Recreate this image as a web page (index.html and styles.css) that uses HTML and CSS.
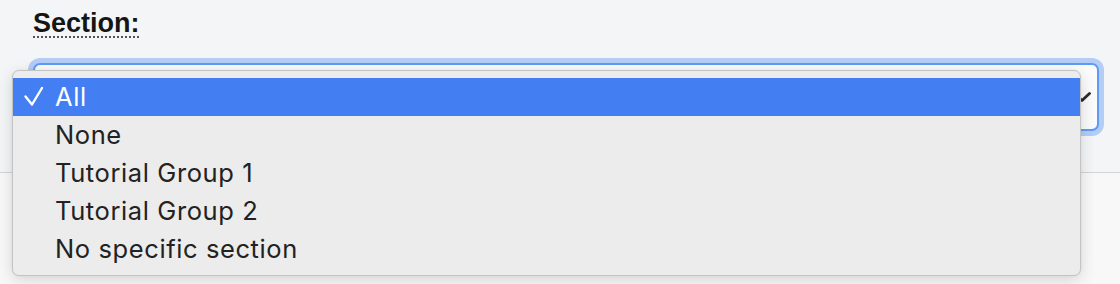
FILE: index.html
```html
<!DOCTYPE html>
<html lang="en">
<head>
<meta charset="utf-8">
<title>Section</title>
<link rel="stylesheet" href="styles.css">
</head>
<body>
<div class="panel">
  <label class="label"><abbr class="abbr" title="Section">Section:</abbr></label>
  <div class="select">
    <svg class="chevron" width="18" height="10" viewBox="0 0 18 10"><polyline points="1.5,1.5 9,8.5 16.5,1.5" fill="none" stroke="#2b2b2b" stroke-width="2.8" stroke-linecap="round" stroke-linejoin="round"/></svg>
  </div>
</div>
<div class="below"></div>
<ul class="menu">
  <li class="item selected"><svg class="check" width="40" height="38" viewBox="0 0 40 38"><polyline points="12.5,18.5 19,26.5 29,10" fill="none" stroke="#fff" stroke-width="2.4" stroke-linecap="round" stroke-linejoin="round"/></svg><span>All</span></li>
  <li class="item"><span>None</span></li>
  <li class="item"><span>Tutorial Group 1</span></li>
  <li class="item"><span>Tutorial Group 2</span></li>
  <li class="item"><span>No specific section</span></li>
</ul>
</body>
</html>
```
FILE: styles.css
```css
html, body {
  margin: 0;
  padding: 0;
}
body {
  width: 1120px;
  height: 284px;
  overflow: hidden;
  background: #f8f8f8;
  position: relative;
  font-family: "Liberation Sans", Arial, sans-serif;
}
.panel {
  box-sizing: border-box;
  height: 173px;
  padding: 8px 21px 0 33px;
  background: #f4f5f7;
  border-bottom: 1px solid #d4d4d6;
}
.label {
  display: block;
  font-weight: bold;
  font-size: 27px;
  line-height: 30px;
  color: #151515;
}
.abbr {
  text-decoration: underline dotted 2px #555;
  text-underline-offset: 4px;
}
.select {
  box-sizing: border-box;
  margin-top: 25px;
  height: 68px;
  border: 2px solid #5e9bf6;
  border-radius: 7px;
  background: #fbfbfb;
  box-shadow: 0 0 0 5px #b3cdf7;
  display: flex;
  align-items: center;
  justify-content: flex-end;
  padding: 0 6px 0 20px;
}
.chevron {
  display: block;
}
.menu {
  position: absolute;
  left: 12px;
  top: 70px;
  box-sizing: border-box;
  width: 1069px;
  height: 206px;
  margin: 0;
  padding: 7px 0 0;
  list-style: none;
  background: #ececec;
  border: 1px solid #c4c4c4;
  border-radius: 7px;
  box-shadow: 0 4px 16px rgba(0, 0, 0, 0.14), 0 0 2px rgba(0, 0, 0, 0.08);
}
.item {
  height: 38px;
  display: flex;
  align-items: center;
  padding-left: 42px;
  padding-bottom: 2px;
  box-sizing: border-box;
  position: relative;
  font-family: "Inter", "Liberation Sans", sans-serif;
  font-size: 25.5px;
  letter-spacing: 0.6px;
  color: #222;
}
.item.selected {
  background: #437ff2;
  color: #fff;
}
.check {
  position: absolute;
  left: 0;
  top: 0;
}
```
